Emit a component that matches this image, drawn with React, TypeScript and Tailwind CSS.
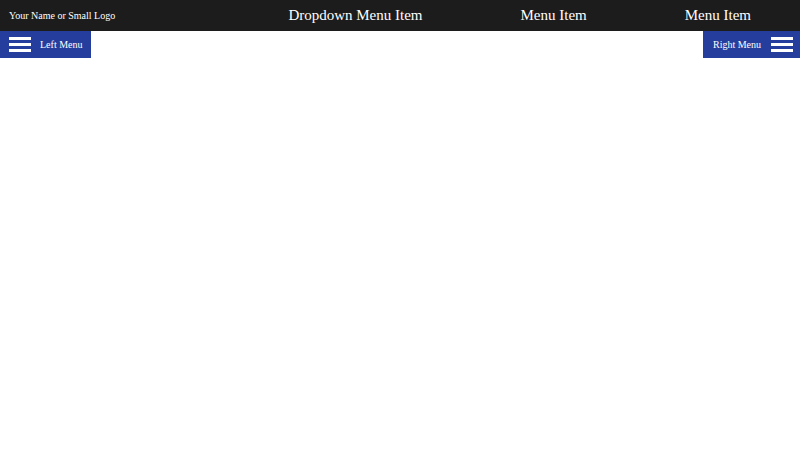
export default function App() {
  const Burger = () => (
    <div className="flex flex-col gap-[3px] w-[22px]">
      <div className="h-[3px] bg-white" />
      <div className="h-[3px] bg-white" />
      <div className="h-[3px] bg-white" />
    </div>
  );
  return (
    <div className="w-[800px] h-[450px] bg-white" style={{ fontFamily: '"Liberation Serif", serif' }}>
      <div className="h-[31px] bg-[#1c1c1c] flex items-center text-white">
        <div className="pl-[9px] text-[10px]">Your Name or Small Logo</div>
        <div className="ml-auto flex text-[15px]">
          <div className="px-[49px]">Dropdown Menu Item</div>
          <div className="px-[49px]">Menu Item</div>
          <div className="px-[49px]">Menu Item</div>
        </div>
      </div>
      <div className="flex justify-between">
        <div className="h-[27px] w-[91px] bg-[#253e9e] flex items-center pl-[9px] gap-[9px] text-white text-[10px]">
          <Burger />
          <span>Left Menu</span>
        </div>
        <div className="h-[27px] w-[97px] bg-[#253e9e] flex items-center pl-[10px] gap-[10px] text-white text-[10px]">
          <span>Right Menu</span>
          <Burger />
        </div>
      </div>
    </div>
  );
}
